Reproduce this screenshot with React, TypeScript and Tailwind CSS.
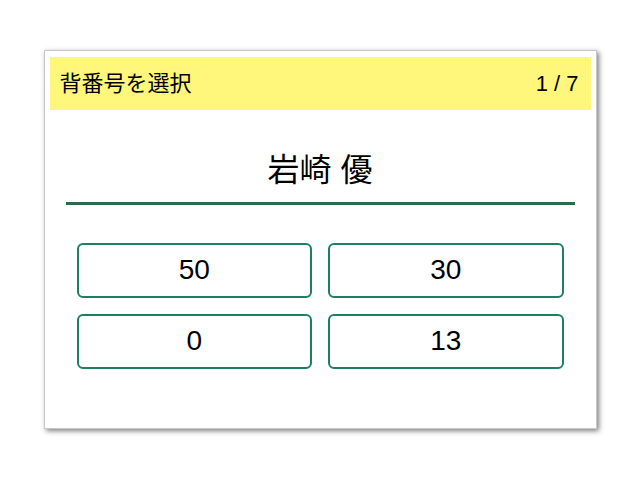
const numbers = [50, 30, 0, 13]

export default function App() {
    return (
        <div
            className="min-h-screen bg-white flex items-center justify-center text-black"
            style={{ fontFamily: '"Liberation Sans", "Noto Sans CJK JP", sans-serif' }}
        >
            <div className="w-[553px] h-[379px] -mt-[2px] bg-white border border-[#c8c8c8] shadow-[2px_2px_5px_rgba(0,0,0,0.5)] px-[5px] pt-[6px]">
                {/* header */}
                <div className="h-[53px] bg-[#fff77b] flex items-center justify-between pl-[10px] pr-[12px] text-[22px]">
                    <span>背番号を選択</span>
                    <span>1 / 7</span>
                </div>

                {/* player name */}
                <div className="mx-[16px] mt-[41px] pb-[13px] border-b-[3px] border-[#2d6a4c] text-center text-[32px] leading-[38px]">
                    岩崎 優
                </div>

                {/* number choices */}
                <div className="mx-[27px] mt-[38px] grid grid-cols-2 gap-4">
                    {numbers.map((n) => (
                        <button
                            key={n}
                            className="h-[55px] border-2 border-[#1b8064] rounded-[6px] bg-white text-[28px] flex items-center justify-center"
                        >
                            {n}
                        </button>
                    ))}
                </div>
            </div>
        </div>
    )
}
